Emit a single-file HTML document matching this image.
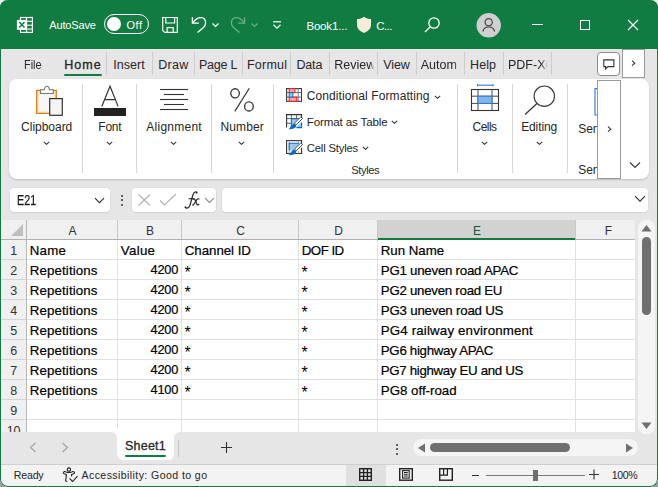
<!DOCTYPE html>
<html><head><meta charset="utf-8"><style>
html,body{margin:0;padding:0;}
body{width:658px;height:487px;overflow:hidden;position:relative;background:linear-gradient(#f0f0f0 0,#f0f0f0 50%,#9c9c9c 50%,#9c9c9c 100%);font-family:'Liberation Sans', sans-serif;}
.r{position:absolute;}
.t{position:absolute;white-space:nowrap;}
</style></head><body>
<div class="r" style="left:0px;top:0px;width:658px;height:487px;background:#e6e6e6;border-radius:8px;"></div>
<div class="r" style="left:0px;top:0px;width:658px;height:49px;background:#107c41;border-radius:8px 8px 0 0;"></div>
<svg class="r" style="left:16px;top:16px;" width="19" height="19" viewBox="0 0 19 19">
<rect x="4.5" y="1.5" width="11.9" height="14.9" fill="none" stroke="#fff" stroke-width="1.2"/>
<line x1="10.55" y1="1.5" x2="10.55" y2="16.4" stroke="#fff" stroke-width="1.2"/>
<line x1="4.5" y1="5.3" x2="16.4" y2="5.3" stroke="#fff" stroke-width="1.1"/>
<line x1="4.5" y1="9.2" x2="16.4" y2="9.2" stroke="#fff" stroke-width="1.1"/>
<line x1="4.5" y1="13.1" x2="16.4" y2="13.1" stroke="#fff" stroke-width="1.1"/>
<rect x="0.9" y="3.9" width="9.3" height="9.9" fill="#fff"/>
<path d="M3.3 5.9 L8.5 11.6 M8.5 5.9 L3.3 11.6" stroke="#107c41" stroke-width="1.5"/>
</svg>
<div class="t" style="top:20.19px;font-size:11px;line-height:11px;color:#fff;font-weight:normal;letter-spacing:-0.129px;left:49.20px;">AutoSave</div>
<div class="r" style="left:104px;top:14px;width:45px;height:19.5px;border:1.3px solid #fff;border-radius:10px;box-sizing:border-box;"></div>
<div class="r" style="left:106.6px;top:16.7px;width:14.5px;height:14.5px;background:#fff;border-radius:50%;"></div>
<div class="t" style="top:20.19px;font-size:11px;line-height:11px;color:#fff;font-weight:normal;letter-spacing:0.465px;left:126.60px;">Off</div>
<svg class="r" style="left:161px;top:16px;" width="18" height="18" viewBox="0 0 18 18">
<path d="M1.7 1.5 H16.3 V16.3 H3.7 L1.7 14.3 Z" fill="none" stroke="#fff" stroke-width="1.2"/>
<path d="M4.8 1.5 V7 H13.6 V1.5" fill="none" stroke="#fff" stroke-width="1.2"/>
<path d="M6.1 16.3 V11.7 H12.2 V16.3" fill="none" stroke="#fff" stroke-width="1.2"/>
</svg>
<svg class="r" style="left:190px;top:16px;" width="18" height="18" viewBox="0 0 18 18"><path d="M2.4 1.2 V7.2 H8.9" fill="none" stroke="#fff" stroke-width="1.3"/>
<path d="M2.9 6.6 C5.3 3 8 1.6 11 1.6 C13.8 1.6 15.6 3.8 15.6 7 C15.6 9 14.8 10.2 13.5 11.5 L7.5 16.4" fill="none" stroke="#fff" stroke-width="1.3"/></svg>
<svg class="r" style="left:211px;top:21.5px;" width="9" height="6" viewBox="0 0 9 6"><path d="M1.5 1.5 L4.5 4.5 L7.5 1.5" fill="none" stroke="#fff" stroke-width="1.2"/></svg>
<svg class="r" style="left:229px;top:16px;transform:scaleX(-1);" width="18" height="18" viewBox="0 0 18 18"><path d="M2.4 1.2 V7.2 H8.9" fill="none" stroke="#6cae88" stroke-width="1.3"/>
<path d="M2.9 6.6 C5.3 3 8 1.6 11 1.6 C13.8 1.6 15.6 3.8 15.6 7 C15.6 9 14.8 10.2 13.5 11.5 L7.5 16.4" fill="none" stroke="#6cae88" stroke-width="1.3"/></svg>
<svg class="r" style="left:250px;top:21.5px;" width="9" height="6" viewBox="0 0 9 6"><path d="M1.5 1.5 L4.5 4.5 L7.5 1.5" fill="none" stroke="#6cae88" stroke-width="1.2"/></svg>
<svg class="r" style="left:272px;top:20px;" width="10" height="10" viewBox="0 0 10 10">
<line x1="1" y1="1.8" x2="9" y2="1.8" stroke="#fff" stroke-width="1.2"/>
<path d="M1.5 4.8 L5 8.2 L8.5 4.8" fill="none" stroke="#fff" stroke-width="1.2"/>
</svg>
<div class="t" style="top:21.07px;font-size:11.5px;line-height:11.5px;color:#fff;font-weight:normal;letter-spacing:-0.170px;left:306.40px;">Book1...</div>
<svg class="r" style="left:356px;top:16px;" width="16" height="18" viewBox="0 0 16 18"><path d="M8 0.8 C10 2.4 12.5 3.1 15 3.1 V9 C15 12.5 12 15.5 8 17 C4 15.5 1 12.5 1 9 V3.1 C3.5 3.1 6 2.4 8 0.8 Z" fill="#f6ecdc"/></svg>
<div class="t" style="top:21.07px;font-size:11.5px;line-height:11.5px;color:#fff;font-weight:normal;letter-spacing:-0.597px;left:376.30px;">C...</div>
<svg class="r" style="left:423px;top:16px;" width="18" height="18" viewBox="0 0 18 18">
<circle cx="11" cy="7" r="5.2" fill="none" stroke="#fff" stroke-width="1.3"/>
<line x1="7.3" y1="10.7" x2="2" y2="16" stroke="#fff" stroke-width="1.4"/>
</svg>
<svg class="r" style="left:476px;top:13px;" width="26" height="25" viewBox="0 0 26 25">
<circle cx="12.7" cy="12.3" r="12.2" fill="#cfcfcf"/>
<circle cx="12.7" cy="9.3" r="3.6" fill="none" stroke="#444" stroke-width="1.2"/>
<path d="M6.8 18.5 C7.5 15.3 10 14 12.7 14 C15.4 14 17.9 15.3 18.6 18.5" fill="none" stroke="#444" stroke-width="1.2"/>
</svg>
<div class="r" style="left:531.5px;top:24px;width:11px;height:1.2px;background:#fff;"></div>
<div class="r" style="left:579.5px;top:19.5px;width:10.5px;height:10.5px;border:1.2px solid #fff;box-sizing:border-box;"></div>
<svg class="r" style="left:627px;top:19px;" width="12" height="12" viewBox="0 0 12 12"><path d="M1 1 L11 11 M11 1 L1 11" stroke="#fff" stroke-width="1.2"/></svg>
<div class="t" style="top:59.02px;font-size:12.5px;line-height:12.5px;color:#262626;font-weight:normal;transform:scaleX(0.8689);transform-origin:0 0;left:23.90px;">File</div>
<div class="t" style="top:59.02px;font-size:12.5px;line-height:12.5px;color:#262626;font-weight:normal;letter-spacing:1.086px;left:64.20px;-webkit-text-stroke:0.3px #262626;">Home</div>
<div class="t" style="top:59.02px;font-size:12.5px;line-height:12.5px;color:#262626;font-weight:normal;letter-spacing:0.048px;left:113.30px;">Insert</div>
<div class="t" style="top:59.02px;font-size:12.5px;line-height:12.5px;color:#262626;font-weight:normal;letter-spacing:0.278px;left:158.20px;">Draw</div>
<div class="t" style="top:59.02px;font-size:12.5px;line-height:12.5px;color:#262626;font-weight:normal;letter-spacing:-0.223px;left:199.00px;">Page L</div>
<div class="t" style="top:59.02px;font-size:12.5px;line-height:12.5px;color:#262626;font-weight:normal;letter-spacing:0.222px;left:247.00px;">Formul</div>
<div class="t" style="top:59.02px;font-size:12.5px;line-height:12.5px;color:#262626;font-weight:normal;letter-spacing:-0.134px;left:296.40px;">Data</div>
<div class="t" style="top:59.02px;font-size:12.5px;line-height:12.5px;color:#262626;font-weight:normal;letter-spacing:0.003px;left:334.30px;width:39.5px;overflow:hidden;-webkit-mask-image:linear-gradient(90deg,#000 92%,transparent 100%);">Review</div>
<div class="t" style="top:59.02px;font-size:12.5px;line-height:12.5px;color:#262626;font-weight:normal;letter-spacing:-0.122px;left:383.30px;">View</div>
<div class="t" style="top:59.02px;font-size:12.5px;line-height:12.5px;color:#262626;font-weight:normal;left:420.70px;width:40px;overflow:hidden;-webkit-mask-image:linear-gradient(90deg,#000 82%,transparent 100%);">Autom</div>
<div class="t" style="top:59.02px;font-size:12.5px;line-height:12.5px;color:#262626;font-weight:normal;letter-spacing:0.098px;left:470.00px;">Help</div>
<div class="t" style="top:59.02px;font-size:12.5px;line-height:12.5px;color:#262626;font-weight:normal;left:508.00px;width:40px;overflow:hidden;-webkit-mask-image:linear-gradient(90deg,#000 82%,transparent 100%);">PDF-XC</div>
<div class="r" style="left:64px;top:74px;width:38px;height:2px;background:#107c41;border-radius:1px;"></div>
<div class="r" style="left:106px;top:52px;width:1px;height:23px;background:#cdcdcd;"></div>
<div class="r" style="left:152px;top:52px;width:1px;height:23px;background:#cdcdcd;"></div>
<div class="r" style="left:194px;top:52px;width:1px;height:23px;background:#cdcdcd;"></div>
<div class="r" style="left:242px;top:52px;width:1px;height:23px;background:#cdcdcd;"></div>
<div class="r" style="left:290px;top:52px;width:1px;height:23px;background:#cdcdcd;"></div>
<div class="r" style="left:329px;top:52px;width:1px;height:23px;background:#cdcdcd;"></div>
<div class="r" style="left:377px;top:52px;width:1px;height:23px;background:#cdcdcd;"></div>
<div class="r" style="left:416px;top:52px;width:1px;height:23px;background:#cdcdcd;"></div>
<div class="r" style="left:464px;top:52px;width:1px;height:23px;background:#cdcdcd;"></div>
<div class="r" style="left:503px;top:52px;width:1px;height:23px;background:#cdcdcd;"></div>
<div class="r" style="left:551px;top:52px;width:1px;height:23px;background:#cdcdcd;"></div>
<div class="r" style="left:597.2px;top:52.2px;width:23.3px;height:23.6px;background:#fff;border:1px solid #8c8c8c;border-radius:4px;box-sizing:border-box;"></div>
<svg class="r" style="left:603px;top:58.5px;" width="13" height="12" viewBox="0 0 13 12"><path d="M0.8 0.9 H10.9 V7.6 H5 L2.6 9.9 V7.6 H0.8 Z" fill="none" stroke="#333" stroke-width="1.1"/></svg>
<div class="r" style="left:621.5px;top:49px;width:23.5px;height:29px;background:#fff;border:1px solid #9a9a9a;box-sizing:border-box;"></div>
<svg class="r" style="left:630.5px;top:60px;" width="6" height="7" viewBox="0 0 6 7"><path d="M1 0.7 L3.8 3.2 L1 5.7" fill="none" stroke="#333" stroke-width="1.1"/></svg>
<div class="r" style="left:9px;top:79px;width:640px;height:100px;background:#fff;border-radius:8px;box-shadow:0 1px 2px rgba(0,0,0,0.18);"></div>
<div class="r" style="left:82px;top:84px;width:1px;height:89px;background:#d6d6d6;"></div>
<div class="r" style="left:136px;top:84px;width:1px;height:89px;background:#d6d6d6;"></div>
<div class="r" style="left:211px;top:84px;width:1px;height:89px;background:#d6d6d6;"></div>
<div class="r" style="left:273px;top:84px;width:1px;height:89px;background:#d6d6d6;"></div>
<div class="r" style="left:457px;top:84px;width:1px;height:89px;background:#d6d6d6;"></div>
<div class="r" style="left:512px;top:84px;width:1px;height:89px;background:#d6d6d6;"></div>
<div class="r" style="left:567px;top:84px;width:1px;height:89px;background:#d6d6d6;"></div>
<svg class="r" style="left:35px;top:85px;" width="30" height="32" viewBox="0 0 30 32">
<rect x="1.7" y="5.4" width="19.6" height="23" fill="#fbe3a9" stroke="#e07b1a" stroke-width="1.2"/>
<rect x="3.6" y="7.3" width="15.8" height="19.2" fill="#f7f7f7"/>
<path d="M5.5 8.5 V4.8 H9.3 C9.6 2.5 10.5 1.2 11.9 1.2 C13.3 1.2 14.2 2.5 14.5 4.8 H18.3 V8.5 Z" fill="#fff" stroke="#777" stroke-width="1.1"/>
<rect x="14.7" y="13.6" width="12.6" height="16.7" fill="#f5f5f5" stroke="#333" stroke-width="1.2"/>
</svg>
<div class="t" style="top:121.24px;font-size:12px;line-height:12px;color:#262626;font-weight:normal;letter-spacing:-0.020px;left:21.10px;">Clipboard</div>
<svg class="r" style="left:43.1px;top:140.5px;" width="7" height="4" viewBox="0 0 7 4"><path d="M0.8 0.8 L3.5 3.3 L6.2 0.8" fill="none" stroke="#333" stroke-width="1.1"/></svg>
<svg class="r" style="left:94px;top:85px;" width="33" height="31" viewBox="0 0 33 31">
<path d="M7.8 21.4 L16 1.2 L24.1 21.4 M10.8 14.6 H21.2" fill="none" stroke="#333" stroke-width="1.2"/>
<rect x="0" y="23" width="32" height="8" fill="#222"/>
</svg>
<div class="t" style="top:121.24px;font-size:12px;line-height:12px;color:#262626;font-weight:normal;letter-spacing:-0.237px;left:98.35px;">Font</div>
<svg class="r" style="left:106.0px;top:140.5px;" width="7" height="4" viewBox="0 0 7 4"><path d="M0.8 0.8 L3.5 3.3 L6.2 0.8" fill="none" stroke="#333" stroke-width="1.1"/></svg>
<svg class="r" style="left:160px;top:88px;" width="28" height="23" viewBox="0 0 28 23">
<line x1="0" y1="1.5" x2="28" y2="1.5" stroke="#333" stroke-width="1.1"/>
<line x1="4" y1="6.5" x2="24" y2="6.5" stroke="#333" stroke-width="1.1"/>
<line x1="0" y1="11.5" x2="28" y2="11.5" stroke="#333" stroke-width="1.1"/>
<line x1="4" y1="16.5" x2="24" y2="16.5" stroke="#333" stroke-width="1.1"/>
<line x1="0" y1="21.5" x2="28" y2="21.5" stroke="#333" stroke-width="1.1"/>
</svg>
<div class="t" style="top:121.14px;font-size:12px;line-height:12px;color:#262626;font-weight:normal;letter-spacing:0.242px;left:146.35px;">Alignment</div>
<svg class="r" style="left:170.3px;top:140.5px;" width="7" height="4" viewBox="0 0 7 4"><path d="M0.8 0.8 L3.5 3.3 L6.2 0.8" fill="none" stroke="#333" stroke-width="1.1"/></svg>
<svg class="r" style="left:228px;top:86px;" width="28" height="28" viewBox="0 0 28 28">
<ellipse cx="7.05" cy="7.35" rx="4.3" ry="4.6" fill="none" stroke="#333" stroke-width="1.3"/>
<ellipse cx="20.95" cy="20.4" rx="4.3" ry="4.6" fill="none" stroke="#333" stroke-width="1.3"/>
<line x1="21.3" y1="2.3" x2="6.8" y2="25.4" stroke="#333" stroke-width="1.2"/>
</svg>
<div class="t" style="top:121.14px;font-size:12px;line-height:12px;color:#262626;font-weight:normal;letter-spacing:0.144px;left:220.40px;">Number</div>
<svg class="r" style="left:238.3px;top:140.5px;" width="7" height="4" viewBox="0 0 7 4"><path d="M0.8 0.8 L3.5 3.3 L6.2 0.8" fill="none" stroke="#333" stroke-width="1.1"/></svg>
<svg class="r" style="left:286px;top:88px;" width="16" height="14" viewBox="0 0 16 14">
<rect x="0.6" y="0.6" width="15" height="12.7" fill="#fff" stroke="#333" stroke-width="1.1"/>
<line x1="0.6" y1="4.6" x2="15.6" y2="4.6" stroke="#555" stroke-width="0.9"/>
<line x1="0.6" y1="9.1" x2="15.6" y2="9.1" stroke="#555" stroke-width="0.9"/>
<line x1="12.2" y1="0.6" x2="12.2" y2="13.3" stroke="#777" stroke-width="0.9"/>
<rect x="3.2" y="0.6" width="5.7" height="4" fill="#f7a0aa" stroke="#e8202a" stroke-width="1"/>
<rect x="3.2" y="9.1" width="7.6" height="4.2" fill="#f7a0aa" stroke="#e8202a" stroke-width="1"/>
<rect x="3.2" y="4.6" width="3.7" height="4.5" fill="#9cc8f0" stroke="#0f6cbd" stroke-width="1"/>
</svg>
<div class="t" style="top:89.74px;font-size:12px;line-height:12px;color:#262626;font-weight:normal;letter-spacing:0.094px;left:306.80px;">Conditional Formatting</div>
<svg class="r" style="left:433.5px;top:94.5px;" width="7" height="4" viewBox="0 0 7 4"><path d="M0.8 0.8 L3.5 3.3 L6.2 0.8" fill="none" stroke="#333" stroke-width="1.1"/></svg>
<svg class="r" style="left:286px;top:114px;" width="17" height="16" viewBox="0 0 17 16">
<path d="M0.6 13.6 V0.6 H15.6 V4" fill="none" stroke="#333" stroke-width="1.1"/>
<line x1="0.6" y1="4.6" x2="5.4" y2="4.6" stroke="#555" stroke-width="0.9"/>
<line x1="0.6" y1="9.3" x2="5.4" y2="9.3" stroke="#555" stroke-width="0.9"/>
<line x1="5.4" y1="0.6" x2="5.4" y2="4.6" stroke="#555" stroke-width="0.9"/>
<line x1="10.5" y1="0.6" x2="10.5" y2="4.6" stroke="#555" stroke-width="0.9"/>
<rect x="5.4" y="4.6" width="10.2" height="9" fill="#9cc8f0"/>
<path d="M5.4 13.6 V4.6 H13" fill="none" stroke="#0f6cbd" stroke-width="1.1"/>
<path d="M15.6 8.5 V13.6 H10.5" fill="none" stroke="#0f6cbd" stroke-width="1.1"/>
<path d="M16.2 4.2 L8.8 11.6" stroke="#fff" stroke-width="4.2"/>
<path d="M16.5 4.5 L10.2 10.8 L8.5 9.1 L14.8 2.8 Z" fill="#fff" stroke="#333" stroke-width="0.9"/>
<path d="M8.3 9.3 L10.4 11.4 C10 13.8 7.4 15.3 2.6 15.2 C4.6 14 4.8 10.9 8.3 9.3 Z" fill="#0f6cbd"/></svg>
<div class="t" style="top:116.48px;font-size:11.6px;line-height:11.6px;color:#262626;font-weight:normal;letter-spacing:-0.140px;left:306.80px;">Format as Table</div>
<svg class="r" style="left:391.0px;top:119.7px;" width="7" height="4" viewBox="0 0 7 4"><path d="M0.8 0.8 L3.5 3.3 L6.2 0.8" fill="none" stroke="#333" stroke-width="1.1"/></svg>
<svg class="r" style="left:286px;top:140px;" width="17" height="16" viewBox="0 0 17 16">
<rect x="0.6" y="0.6" width="15" height="12.9" fill="#fff" stroke="#333" stroke-width="1.1"/>
<line x1="3.2" y1="0.6" x2="3.2" y2="13.5" stroke="#999" stroke-width="0.8"/>
<line x1="12.5" y1="0.6" x2="12.5" y2="13.5" stroke="#999" stroke-width="0.8"/>
<rect x="3.2" y="3.2" width="9.8" height="7.3" fill="#9cc8f0"/>
<path d="M3.2 10.5 V3.2 H13" fill="none" stroke="#0f6cbd" stroke-width="1.1"/>
<path d="M16.2 4.2 L8.8 11.6" stroke="#fff" stroke-width="4.2"/>
<path d="M16.5 4.5 L10.2 10.8 L8.5 9.1 L14.8 2.8 Z" fill="#fff" stroke="#333" stroke-width="0.9"/>
<path d="M8.3 9.3 L10.4 11.4 C10 13.8 7.4 15.3 2.6 15.2 C4.6 14 4.8 10.9 8.3 9.3 Z" fill="#0f6cbd"/></svg>
<div class="t" style="top:142.73px;font-size:11.3px;line-height:11.3px;color:#262626;font-weight:normal;letter-spacing:-0.198px;left:306.80px;">Cell Styles</div>
<svg class="r" style="left:362.1px;top:145.7px;" width="7" height="4" viewBox="0 0 7 4"><path d="M0.8 0.8 L3.5 3.3 L6.2 0.8" fill="none" stroke="#333" stroke-width="1.1"/></svg>
<div class="t" style="top:164.52px;font-size:11.2px;line-height:11.2px;color:#262626;font-weight:normal;letter-spacing:-0.440px;left:351.35px;">Styles</div>
<svg class="r" style="left:470px;top:84px;" width="30" height="28" viewBox="0 0 30 28">
<line x1="7.5" y1="1.2" x2="23" y2="1.2" stroke="#2c7ad6" stroke-width="1.1"/>
<line x1="7.5" y1="0" x2="7.5" y2="2.5" stroke="#2c7ad6" stroke-width="1"/>
<line x1="23" y1="0" x2="23" y2="2.5" stroke="#2c7ad6" stroke-width="1"/>
<rect x="1.5" y="5.5" width="27" height="21" fill="#fff" stroke="#333" stroke-width="1.1"/>
<line x1="1.5" y1="12.2" x2="28.5" y2="12.2" stroke="#333" stroke-width="0.9"/>
<line x1="1.5" y1="19.4" x2="28.5" y2="19.4" stroke="#333" stroke-width="0.9"/>
<line x1="8" y1="5.5" x2="8" y2="26.5" stroke="#333" stroke-width="0.9"/>
<line x1="22" y1="5.5" x2="22" y2="26.5" stroke="#333" stroke-width="0.9"/>
<rect x="8" y="12.2" width="14" height="7.2" fill="#7fb6ec" stroke="#2c7ad6" stroke-width="1"/>
</svg>
<div class="t" style="top:121.14px;font-size:12px;line-height:12px;color:#262626;font-weight:normal;letter-spacing:-0.518px;left:472.50px;">Cells</div>
<svg class="r" style="left:481.1px;top:140.5px;" width="7" height="4" viewBox="0 0 7 4"><path d="M0.8 0.8 L3.5 3.3 L6.2 0.8" fill="none" stroke="#333" stroke-width="1.1"/></svg>
<svg class="r" style="left:523px;top:85px;" width="33" height="31" viewBox="0 0 33 31">
<circle cx="21.3" cy="11.2" r="10.2" fill="#fff" stroke="#333" stroke-width="1.1"/>
<line x1="14" y1="18.5" x2="2" y2="29.5" stroke="#333" stroke-width="1.2"/>
</svg>
<div class="t" style="top:121.14px;font-size:12px;line-height:12px;color:#262626;font-weight:normal;letter-spacing:-0.098px;left:521.15px;">Editing</div>
<svg class="r" style="left:536.0px;top:140.5px;" width="7" height="4" viewBox="0 0 7 4"><path d="M0.8 0.8 L3.5 3.3 L6.2 0.8" fill="none" stroke="#333" stroke-width="1.1"/></svg>
<svg class="r" style="left:593.5px;top:88px;" width="6" height="28" viewBox="0 0 6 28"><path d="M5 0.6 H1 V27 H5" fill="none" stroke="#2c7ad6" stroke-width="1.1"/></svg>
<div class="t" style="top:123.34px;font-size:12px;line-height:12px;color:#262626;font-weight:normal;left:578.20px;">Sen</div>
<div class="t" style="top:163.54px;font-size:12px;line-height:12px;color:#262626;font-weight:normal;left:578.20px;">Sen</div>
<div class="r" style="left:597px;top:79.5px;width:24px;height:99.5px;background:#fff;border:1px solid #9a9a9a;box-sizing:border-box;"></div>
<svg class="r" style="left:606.5px;top:125.5px;" width="6" height="7" viewBox="0 0 6 7"><path d="M1 0.7 L3.8 3.2 L1 5.7" fill="none" stroke="#333" stroke-width="1.1"/></svg>
<svg class="r" style="left:629px;top:161px;" width="12" height="8" viewBox="0 0 12 8"><path d="M1 1.5 L6 6.5 L11 1.5" fill="none" stroke="#333" stroke-width="1.1"/></svg>
<div class="r" style="left:10px;top:188px;width:100px;height:24px;background:#fff;border-radius:4px;box-shadow:0 0 0 0.6px #d6d6d6, 0 1px 1px rgba(0,0,0,0.10);"></div>
<div class="t" style="top:192.75px;font-size:14px;line-height:14px;color:#1a1a1a;font-weight:normal;transform:scaleX(0.7668);transform-origin:0 0;left:17.00px;-webkit-text-stroke:0.25px #1a1a1a;">E21</div>
<svg class="r" style="left:94px;top:197px;" width="11" height="7" viewBox="0 0 11 7"><path d="M1 1.2 L5.5 5.7 L10 1.2" fill="none" stroke="#333" stroke-width="1.2"/></svg>
<div class="r" style="left:120.5px;top:194.8px;width:2px;height:2px;background:#333;border-radius:1px;"></div>
<div class="r" style="left:120.5px;top:199.2px;width:2px;height:2px;background:#333;border-radius:1px;"></div>
<div class="r" style="left:120.5px;top:203.6px;width:2px;height:2px;background:#333;border-radius:1px;"></div>
<div class="r" style="left:132px;top:188px;width:84px;height:24px;background:#fff;border-radius:4px;box-shadow:0 0 0 0.6px #d6d6d6, 0 1px 1px rgba(0,0,0,0.10);"></div>
<svg class="r" style="left:137px;top:193px;" width="15" height="14" viewBox="0 0 15 14"><path d="M1.5 1.5 L13 12.5 M13 1.5 L1.5 12.5" stroke="#b3b3b3" stroke-width="1.2"/></svg>
<svg class="r" style="left:159px;top:193px;" width="18" height="14" viewBox="0 0 18 14"><path d="M1 7.5 L5.5 12 L17 1" fill="none" stroke="#b3b3b3" stroke-width="1.2"/></svg>
<svg class="r" style="left:183px;top:190px;" width="18" height="20" viewBox="0 0 18 20">
<path d="M14.3 2.7 C13.5 1.6 11.7 1.6 10.8 3 C9.9 4.4 8.6 9.5 7.4 13.8 C6.7 16.3 5.5 18.1 3.7 18.1 C2.9 18.1 2.4 17.8 2 17.4" fill="none" stroke="#262626" stroke-width="1.25"/>
<circle cx="13.6" cy="2.8" r="0.85" fill="#262626"/>
<circle cx="2.5" cy="17.2" r="0.85" fill="#262626"/>
<path d="M5.6 8.7 H11.2" stroke="#262626" stroke-width="1.1"/>
<path d="M9.8 9.5 C10.6 8.6 11.6 8.7 12.1 10 L13.7 14 C14.1 15 15.1 15.2 16.2 14.3" fill="none" stroke="#262626" stroke-width="1.2"/>
<path d="M16.4 9.3 C15.6 8.5 14.6 8.6 13.8 9.6 L11.2 13.8 C10.5 15 9.8 15.2 9.2 14.7" fill="none" stroke="#262626" stroke-width="1.2"/>
</svg>
<svg class="r" style="left:204px;top:197px;" width="11" height="7" viewBox="0 0 11 7"><path d="M1 1.2 L5.5 5.5 L10 1.2" fill="none" stroke="#888" stroke-width="1.1"/></svg>
<div class="r" style="left:222px;top:188px;width:426px;height:24px;background:#fff;border-radius:4px;box-shadow:0 0 0 0.6px #d6d6d6, 0 1px 1px rgba(0,0,0,0.10);"></div>
<svg class="r" style="left:633.5px;top:195px;" width="12" height="8" viewBox="0 0 12 8"><path d="M1 1.2 L6 6.2 L11 1.2" fill="none" stroke="#333" stroke-width="1.2"/></svg>
<div class="r" style="left:1px;top:220px;width:634px;height:212px;background:#fff;"></div>
<div class="r" style="left:1px;top:220px;width:634px;height:19px;background:#f0f0f0;"></div>
<div class="r" style="left:378px;top:220px;width:197px;height:19px;background:#d2d2d2;"></div>
<div class="r" style="left:1px;top:240px;width:25px;height:192px;background:#f0f0f0;"></div>
<div class="r" style="left:27px;top:259px;width:608px;height:1px;background:#e1e1e1;"></div>
<div class="r" style="left:1px;top:259px;width:25px;height:1px;background:#d4d4d4;"></div>
<div class="r" style="left:27px;top:279px;width:608px;height:1px;background:#e1e1e1;"></div>
<div class="r" style="left:1px;top:279px;width:25px;height:1px;background:#d4d4d4;"></div>
<div class="r" style="left:27px;top:299px;width:608px;height:1px;background:#e1e1e1;"></div>
<div class="r" style="left:1px;top:299px;width:25px;height:1px;background:#d4d4d4;"></div>
<div class="r" style="left:27px;top:319px;width:608px;height:1px;background:#e1e1e1;"></div>
<div class="r" style="left:1px;top:319px;width:25px;height:1px;background:#d4d4d4;"></div>
<div class="r" style="left:27px;top:339px;width:608px;height:1px;background:#e1e1e1;"></div>
<div class="r" style="left:1px;top:339px;width:25px;height:1px;background:#d4d4d4;"></div>
<div class="r" style="left:27px;top:359px;width:608px;height:1px;background:#e1e1e1;"></div>
<div class="r" style="left:1px;top:359px;width:25px;height:1px;background:#d4d4d4;"></div>
<div class="r" style="left:27px;top:379px;width:608px;height:1px;background:#e1e1e1;"></div>
<div class="r" style="left:1px;top:379px;width:25px;height:1px;background:#d4d4d4;"></div>
<div class="r" style="left:27px;top:399px;width:608px;height:1px;background:#e1e1e1;"></div>
<div class="r" style="left:1px;top:399px;width:25px;height:1px;background:#d4d4d4;"></div>
<div class="r" style="left:27px;top:419px;width:608px;height:1px;background:#e1e1e1;"></div>
<div class="r" style="left:1px;top:419px;width:25px;height:1px;background:#d4d4d4;"></div>
<div class="r" style="left:27px;top:439px;width:608px;height:1px;background:#e1e1e1;"></div>
<div class="r" style="left:1px;top:439px;width:25px;height:1px;background:#d4d4d4;"></div>
<div class="r" style="left:26px;top:240px;width:1px;height:192px;background:#e1e1e1;"></div>
<div class="r" style="left:26px;top:220px;width:1px;height:19px;background:#c8c8c8;"></div>
<div class="r" style="left:117px;top:240px;width:1px;height:192px;background:#e1e1e1;"></div>
<div class="r" style="left:117px;top:220px;width:1px;height:19px;background:#c8c8c8;"></div>
<div class="r" style="left:181px;top:240px;width:1px;height:192px;background:#e1e1e1;"></div>
<div class="r" style="left:181px;top:220px;width:1px;height:19px;background:#c8c8c8;"></div>
<div class="r" style="left:298px;top:240px;width:1px;height:192px;background:#e1e1e1;"></div>
<div class="r" style="left:298px;top:220px;width:1px;height:19px;background:#c8c8c8;"></div>
<div class="r" style="left:377px;top:240px;width:1px;height:192px;background:#e1e1e1;"></div>
<div class="r" style="left:377px;top:220px;width:1px;height:19px;background:#c8c8c8;"></div>
<div class="r" style="left:575px;top:240px;width:1px;height:192px;background:#e1e1e1;"></div>
<div class="r" style="left:575px;top:220px;width:1px;height:19px;background:#c8c8c8;"></div>
<div class="r" style="left:26px;top:220px;width:1px;height:212px;background:#b8b8b8;"></div>
<div class="r" style="left:1px;top:239px;width:634px;height:1px;background:#b0b0b0;"></div>
<div class="r" style="left:378px;top:238px;width:197px;height:2px;background:#107c41;"></div>
<svg class="r" style="left:10px;top:223px;" width="14" height="14" viewBox="0 0 14 14"><path d="M13 1 V13 H1 Z" fill="#bfbfbf"/></svg>
<div class="t" style="top:224.64px;font-size:12px;line-height:12px;color:#333;font-weight:normal;left:-77.50px;width:300px;text-align:center;">A</div>
<div class="t" style="top:224.64px;font-size:12px;line-height:12px;color:#333;font-weight:normal;left:0.00px;width:300px;text-align:center;">B</div>
<div class="t" style="top:224.64px;font-size:12px;line-height:12px;color:#333;font-weight:normal;left:90.50px;width:300px;text-align:center;">C</div>
<div class="t" style="top:224.64px;font-size:12px;line-height:12px;color:#333;font-weight:normal;left:188.50px;width:300px;text-align:center;">D</div>
<div class="t" style="top:224.64px;font-size:12px;line-height:12px;color:#0e5c2f;font-weight:normal;left:327.00px;width:300px;text-align:center;">E</div>
<div class="t" style="top:224.64px;font-size:12px;line-height:12px;color:#333;font-weight:normal;left:458.50px;width:300px;text-align:center;">F</div>
<div class="t" style="top:244.82px;font-size:12.5px;line-height:12.5px;color:#333;font-weight:normal;left:-136.40px;width:300px;text-align:center;">1</div>
<div class="t" style="top:264.82px;font-size:12.5px;line-height:12.5px;color:#333;font-weight:normal;left:-136.40px;width:300px;text-align:center;">2</div>
<div class="t" style="top:284.82px;font-size:12.5px;line-height:12.5px;color:#333;font-weight:normal;left:-136.40px;width:300px;text-align:center;">3</div>
<div class="t" style="top:304.82px;font-size:12.5px;line-height:12.5px;color:#333;font-weight:normal;left:-136.40px;width:300px;text-align:center;">4</div>
<div class="t" style="top:324.82px;font-size:12.5px;line-height:12.5px;color:#333;font-weight:normal;left:-136.40px;width:300px;text-align:center;">5</div>
<div class="t" style="top:344.82px;font-size:12.5px;line-height:12.5px;color:#333;font-weight:normal;left:-136.40px;width:300px;text-align:center;">6</div>
<div class="t" style="top:364.82px;font-size:12.5px;line-height:12.5px;color:#333;font-weight:normal;left:-136.40px;width:300px;text-align:center;">7</div>
<div class="t" style="top:384.82px;font-size:12.5px;line-height:12.5px;color:#333;font-weight:normal;left:-136.40px;width:300px;text-align:center;">8</div>
<div class="t" style="top:404.82px;font-size:12.5px;line-height:12.5px;color:#333;font-weight:normal;left:-136.40px;width:300px;text-align:center;">9</div>
<div class="t" style="top:424.82px;font-size:12.5px;line-height:12.5px;color:#333;font-weight:normal;left:-136.40px;width:300px;text-align:center;">10</div>
<div class="t" style="top:243.74px;font-size:13.3px;line-height:13.3px;color:#000;font-weight:normal;letter-spacing:0.207px;left:29.80px;-webkit-text-stroke:0.2px #000;">Name</div>
<div class="t" style="top:243.74px;font-size:13.3px;line-height:13.3px;color:#000;font-weight:normal;letter-spacing:0.293px;left:120.80px;-webkit-text-stroke:0.2px #000;">Value</div>
<div class="t" style="top:243.74px;font-size:13.3px;line-height:13.3px;color:#000;font-weight:normal;letter-spacing:-0.049px;left:184.80px;-webkit-text-stroke:0.2px #000;">Channel ID</div>
<div class="t" style="top:243.74px;font-size:13.3px;line-height:13.3px;color:#000;font-weight:normal;letter-spacing:-0.534px;left:301.80px;-webkit-text-stroke:0.2px #000;">DOF ID</div>
<div class="t" style="top:243.74px;font-size:13.3px;line-height:13.3px;color:#000;font-weight:normal;letter-spacing:-0.025px;left:380.80px;-webkit-text-stroke:0.2px #000;">Run Name</div>
<div class="t" style="top:263.74px;font-size:13.3px;line-height:13.3px;color:#000;font-weight:normal;letter-spacing:0.116px;left:29.80px;-webkit-text-stroke:0.2px #000;">Repetitions</div>
<div class="t" style="top:264.16px;font-size:12.8px;line-height:12.8px;color:#000;font-weight:normal;letter-spacing:-0.225px;left:150.50px;-webkit-text-stroke:0.2px #000;">4200</div>
<div class="t" style="top:265.46px;font-size:16px;line-height:16px;color:#000;font-weight:normal;left:184.60px;">*</div>
<div class="t" style="top:265.46px;font-size:16px;line-height:16px;color:#000;font-weight:normal;left:301.60px;">*</div>
<div class="t" style="top:263.74px;font-size:13.3px;line-height:13.3px;color:#000;font-weight:normal;letter-spacing:-0.255px;left:380.80px;-webkit-text-stroke:0.2px #000;">PG1 uneven road APAC</div>
<div class="t" style="top:283.74px;font-size:13.3px;line-height:13.3px;color:#000;font-weight:normal;letter-spacing:0.116px;left:29.80px;-webkit-text-stroke:0.2px #000;">Repetitions</div>
<div class="t" style="top:284.16px;font-size:12.8px;line-height:12.8px;color:#000;font-weight:normal;letter-spacing:-0.225px;left:150.50px;-webkit-text-stroke:0.2px #000;">4200</div>
<div class="t" style="top:285.46px;font-size:16px;line-height:16px;color:#000;font-weight:normal;left:184.60px;">*</div>
<div class="t" style="top:285.46px;font-size:16px;line-height:16px;color:#000;font-weight:normal;left:301.60px;">*</div>
<div class="t" style="top:283.74px;font-size:13.3px;line-height:13.3px;color:#000;font-weight:normal;letter-spacing:-0.278px;left:380.80px;-webkit-text-stroke:0.2px #000;">PG2 uneven road EU</div>
<div class="t" style="top:303.74px;font-size:13.3px;line-height:13.3px;color:#000;font-weight:normal;letter-spacing:0.116px;left:29.80px;-webkit-text-stroke:0.2px #000;">Repetitions</div>
<div class="t" style="top:304.16px;font-size:12.8px;line-height:12.8px;color:#000;font-weight:normal;letter-spacing:-0.225px;left:150.50px;-webkit-text-stroke:0.2px #000;">4200</div>
<div class="t" style="top:305.46px;font-size:16px;line-height:16px;color:#000;font-weight:normal;left:184.60px;">*</div>
<div class="t" style="top:305.46px;font-size:16px;line-height:16px;color:#000;font-weight:normal;left:301.60px;">*</div>
<div class="t" style="top:303.74px;font-size:13.3px;line-height:13.3px;color:#000;font-weight:normal;letter-spacing:-0.219px;left:380.80px;-webkit-text-stroke:0.2px #000;">PG3 uneven road US</div>
<div class="t" style="top:323.74px;font-size:13.3px;line-height:13.3px;color:#000;font-weight:normal;letter-spacing:0.116px;left:29.80px;-webkit-text-stroke:0.2px #000;">Repetitions</div>
<div class="t" style="top:324.16px;font-size:12.8px;line-height:12.8px;color:#000;font-weight:normal;letter-spacing:-0.225px;left:150.50px;-webkit-text-stroke:0.2px #000;">4200</div>
<div class="t" style="top:325.46px;font-size:16px;line-height:16px;color:#000;font-weight:normal;left:184.60px;">*</div>
<div class="t" style="top:325.46px;font-size:16px;line-height:16px;color:#000;font-weight:normal;left:301.60px;">*</div>
<div class="t" style="top:323.74px;font-size:13.3px;line-height:13.3px;color:#000;font-weight:normal;letter-spacing:0.155px;left:380.80px;-webkit-text-stroke:0.2px #000;">PG4 railway environment</div>
<div class="t" style="top:343.74px;font-size:13.3px;line-height:13.3px;color:#000;font-weight:normal;letter-spacing:0.116px;left:29.80px;-webkit-text-stroke:0.2px #000;">Repetitions</div>
<div class="t" style="top:344.16px;font-size:12.8px;line-height:12.8px;color:#000;font-weight:normal;letter-spacing:-0.225px;left:150.50px;-webkit-text-stroke:0.2px #000;">4200</div>
<div class="t" style="top:345.46px;font-size:16px;line-height:16px;color:#000;font-weight:normal;left:184.60px;">*</div>
<div class="t" style="top:345.46px;font-size:16px;line-height:16px;color:#000;font-weight:normal;left:301.60px;">*</div>
<div class="t" style="top:343.74px;font-size:13.3px;line-height:13.3px;color:#000;font-weight:normal;letter-spacing:-0.306px;left:380.80px;-webkit-text-stroke:0.2px #000;">PG6 highway APAC</div>
<div class="t" style="top:363.74px;font-size:13.3px;line-height:13.3px;color:#000;font-weight:normal;letter-spacing:0.116px;left:29.80px;-webkit-text-stroke:0.2px #000;">Repetitions</div>
<div class="t" style="top:364.16px;font-size:12.8px;line-height:12.8px;color:#000;font-weight:normal;letter-spacing:-0.225px;left:150.50px;-webkit-text-stroke:0.2px #000;">4200</div>
<div class="t" style="top:365.46px;font-size:16px;line-height:16px;color:#000;font-weight:normal;left:184.60px;">*</div>
<div class="t" style="top:365.46px;font-size:16px;line-height:16px;color:#000;font-weight:normal;left:301.60px;">*</div>
<div class="t" style="top:363.74px;font-size:13.3px;line-height:13.3px;color:#000;font-weight:normal;letter-spacing:-0.337px;left:380.80px;-webkit-text-stroke:0.2px #000;">PG7 highway EU and US</div>
<div class="t" style="top:383.74px;font-size:13.3px;line-height:13.3px;color:#000;font-weight:normal;letter-spacing:0.116px;left:29.80px;-webkit-text-stroke:0.2px #000;">Repetitions</div>
<div class="t" style="top:384.16px;font-size:12.8px;line-height:12.8px;color:#000;font-weight:normal;letter-spacing:-0.225px;left:150.50px;-webkit-text-stroke:0.2px #000;">4100</div>
<div class="t" style="top:385.46px;font-size:16px;line-height:16px;color:#000;font-weight:normal;left:184.60px;">*</div>
<div class="t" style="top:385.46px;font-size:16px;line-height:16px;color:#000;font-weight:normal;left:301.60px;">*</div>
<div class="t" style="top:383.74px;font-size:13.3px;line-height:13.3px;color:#000;font-weight:normal;letter-spacing:-0.010px;left:380.80px;-webkit-text-stroke:0.2px #000;">PG8 off-road</div>
<div class="r" style="left:1px;top:432px;width:634px;height:10px;background:#fff;"></div>
<div class="r" style="left:1px;top:432px;width:115.5px;height:32px;background:#e6e6e6;border-radius:0 6px 0 0;"></div>
<div class="r" style="left:174.3px;top:432px;width:482.7px;height:32px;background:#e6e6e6;border-radius:6px 0 0 0;"></div>
<div class="r" style="left:116.5px;top:432px;width:57.8px;height:32px;background:#e6e6e6;"></div>
<div class="r" style="left:638px;top:220px;width:17px;height:214px;background:#f5f5f5;border-radius:8px;"></div>
<svg class="r" style="left:641px;top:224px;" width="11" height="8" viewBox="0 0 11 8"><path d="M5.5 1 L10.5 7.5 H0.5 Z" fill="#6f6f6f"/></svg>
<div class="r" style="left:641.5px;top:237px;width:9.5px;height:78px;background:#6f6f6f;border-radius:5px;"></div>
<svg class="r" style="left:641px;top:422px;" width="11" height="8" viewBox="0 0 11 8"><path d="M5.5 7 L10.5 0.5 H0.5 Z" fill="#6f6f6f"/></svg>
<div class="r" style="left:116.5px;top:428px;width:57.8px;height:31.7px;background:#fff;border-radius:0 0 6px 6px;"></div>
<svg class="r" style="left:28px;top:442px;" width="10" height="11" viewBox="0 0 10 11"><path d="M7.5 1 L2.5 5.5 L7.5 10" fill="none" stroke="#a0a0a0" stroke-width="1.1"/></svg>
<svg class="r" style="left:60px;top:442px;" width="10" height="11" viewBox="0 0 10 11"><path d="M2.5 1 L7.5 5.5 L2.5 10" fill="none" stroke="#a0a0a0" stroke-width="1.1"/></svg>
<div class="t" style="top:440.12px;font-size:12.5px;line-height:12.5px;color:#262626;font-weight:normal;letter-spacing:0.217px;left:125.05px;-webkit-text-stroke:0.3px #262626;">Sheet1</div>
<div class="r" style="left:125px;top:455px;width:41px;height:2px;background:#107c41;border-radius:1px;"></div>
<div class="r" style="left:178px;top:439.5px;width:1px;height:17px;background:#c8c8c8;"></div>
<svg class="r" style="left:220px;top:441px;" width="13" height="13" viewBox="0 0 13 13"><path d="M6.5 1 V12 M1 6.5 H12" stroke="#333" stroke-width="1.1"/></svg>
<div class="r" style="left:396px;top:443.8px;width:2px;height:2px;background:#333;border-radius:1px;"></div>
<div class="r" style="left:396px;top:448.2px;width:2px;height:2px;background:#333;border-radius:1px;"></div>
<div class="r" style="left:396px;top:452.6px;width:2px;height:2px;background:#333;border-radius:1px;"></div>
<div class="r" style="left:413px;top:439px;width:225px;height:17px;background:#f5f5f5;border-radius:8.5px;"></div>
<svg class="r" style="left:417px;top:443px;" width="9" height="10" viewBox="0 0 9 10"><path d="M1 5 L8 0.5 V9.5 Z" fill="#6f6f6f"/></svg>
<div class="r" style="left:430px;top:443px;width:140px;height:9px;background:#6f6f6f;border-radius:4.5px;"></div>
<svg class="r" style="left:625px;top:443px;" width="9" height="10" viewBox="0 0 9 10"><path d="M8 5 L1 0.5 V9.5 Z" fill="#6f6f6f"/></svg>
<div class="r" style="left:0px;top:464px;width:658px;height:23px;background:#f3f3f3;border-top:1px solid #d0d0d0;box-sizing:border-box;border-radius:0 0 8px 8px;"></div>
<div class="t" style="top:470.33px;font-size:10.6px;line-height:10.6px;color:#262626;font-weight:normal;letter-spacing:-0.160px;left:13.70px;">Ready</div>
<svg class="r" style="left:60px;top:466px;" width="20" height="18" viewBox="0 0 20 18">
<circle cx="8.9" cy="3.6" r="1.7" fill="none" stroke="#222" stroke-width="1.1"/>
<path d="M3.3 7.3 C3 5.6 4.8 5.2 6.2 5.9 Q8.9 6.9 11.6 5.9 C13 5.2 14.8 5.6 14.5 7.3 C14 8 12.5 8 11.6 8.5 V10.5" fill="none" stroke="#222" stroke-width="1.1"/>
<path d="M3.3 7.3 C3.8 8 5.5 8 6.3 8.5 C6.3 10.5 6 13 5.6 14.2 C5.4 15 6 15.4 7.2 15.4" fill="none" stroke="#222" stroke-width="1.1"/>
<path d="M9.5 12.3 L12.6 15.5 L17.5 10.2" fill="none" stroke="#222" stroke-width="1.1"/>
</svg>
<div class="t" style="top:470.33px;font-size:10.6px;line-height:10.6px;color:#262626;font-weight:normal;letter-spacing:0.397px;left:81.50px;">Accessibility: Good to go</div>
<div class="r" style="left:346px;top:465px;width:40px;height:21px;background:#e0e0e0;"></div>
<svg class="r" style="left:359px;top:468px;" width="13" height="13" viewBox="0 0 13 13">
<rect x="0.7" y="0.7" width="11.6" height="11.6" fill="none" stroke="#222" stroke-width="1.4"/>
<path d="M4.6 0.7 V12.3 M8.4 0.7 V12.3 M0.7 4.6 H12.3 M0.7 8.4 H12.3" stroke="#222" stroke-width="1.4"/>
</svg>
<svg class="r" style="left:399px;top:468px;" width="15" height="13" viewBox="0 0 15 13">
<rect x="0.7" y="0.7" width="12.6" height="11.5" fill="none" stroke="#222" stroke-width="1.4"/>
<rect x="3.6" y="2.6" width="6.6" height="7.5" fill="none" stroke="#222" stroke-width="1.1"/>
<path d="M5 4.5 H8.8 M5 6.3 H8.8 M5 8.1 H8.8" stroke="#222" stroke-width="1"/>
</svg>
<svg class="r" style="left:439px;top:468px;" width="15" height="13" viewBox="0 0 15 13">
<rect x="0.7" y="0.7" width="12.6" height="11.5" fill="none" stroke="#222" stroke-width="1.4"/>
<path d="M4.6 0.7 V7.1 M8.4 0.7 V7.1 H0.7" fill="none" stroke="#222" stroke-width="1.2"/>
</svg>
<div class="r" style="left:472px;top:474.5px;width:7px;height:1px;background:#333;"></div>
<div class="r" style="left:485.5px;top:474.5px;width:99.5px;height:1px;background:#777;"></div>
<div class="r" style="left:533px;top:469.5px;width:4.5px;height:11px;background:#6f6f6f;"></div>
<svg class="r" style="left:589px;top:469px;" width="10" height="11" viewBox="0 0 10 11"><path d="M5 0.5 V10.5 M0 5.5 H10" stroke="#333" stroke-width="1.1"/></svg>
<div class="t" style="top:470.13px;font-size:10.6px;line-height:10.6px;color:#262626;font-weight:normal;letter-spacing:-0.404px;left:611.80px;">100%</div>
<div class="r" style="left:0px;top:0px;width:658px;height:487px;border:1px solid #107c41;border-top:none;box-sizing:border-box;border-radius:8px;"></div>
</body></html>
